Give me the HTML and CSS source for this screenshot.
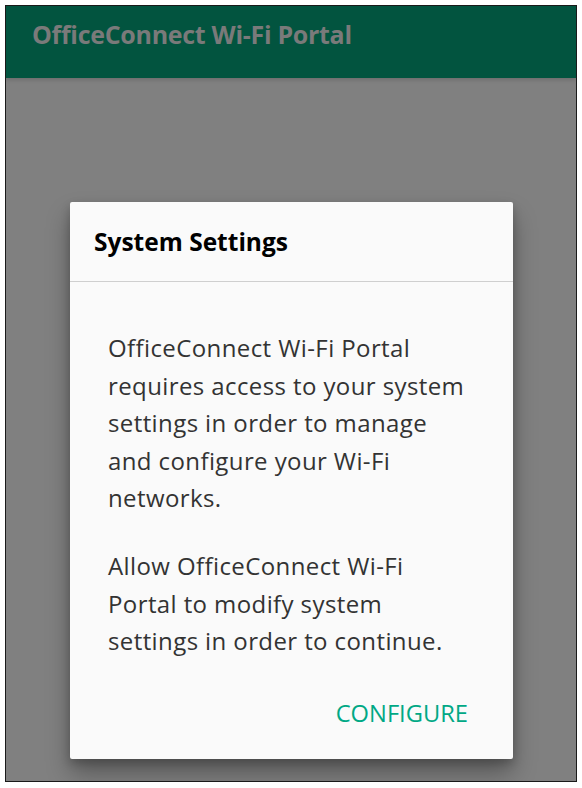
FILE: index.html
```html
<!DOCTYPE html>
<html>
<head>
<meta charset="utf-8">
<link rel="stylesheet" href="styles.css">
</head>
<body>
<div class="frame">
  <header class="appbar">
    <h1 class="app-title">OfficeConnect Wi-Fi Portal</h1>
  </header>
  <main class="scrim">
    <section class="dialog">
      <h2 class="dialog-title">System Settings</h2>
      <div class="dialog-body">
        <p>OfficeConnect Wi-Fi Portal requires access to your system settings in order to manage and configure your Wi-Fi networks.</p>
        <p>Allow OfficeConnect Wi-Fi Portal to modify system settings in order to continue.</p>
      </div>
      <div class="dialog-actions">
        <button class="action">CONFIGURE</button>
      </div>
    </section>
  </main>
</div>
</body>
</html>
```
FILE: styles.css
```css
html, body {
  margin: 0;
  padding: 0;
  background: #ffffff;
}
body {
  font-family: "Open Sans", "Noto Sans", sans-serif;
}
.frame {
  margin: 5px;
  width: 570px;
  height: 775px;
  border: 1px solid #1a1a1a;
  display: flex;
  flex-direction: column;
  overflow: hidden;
}
.appbar {
  height: 72px;
  flex: none;
  background: #02543f;
  display: flex;
  align-items: center;
  padding-left: 26px;
  position: relative;
  z-index: 1;
  box-shadow: 0 2px 4px rgba(0,0,0,0.15);
}
.app-title {
  margin: 0 0 16px 0;
  font-size: 25px;
  font-weight: 700;
  color: #7a7a7a;
  letter-spacing: -0.3px;
}
.scrim {
  flex: 1;
  background: #808080;
  padding: 124px 63px 0 64px;
}
.dialog {
  background: #fafafa;
  height: 557px;
  border-radius: 2px;
  box-shadow: 0 14px 24px rgba(0,0,0,0.32), 0 4px 10px rgba(0,0,0,0.2);
  display: flex;
  flex-direction: column;
}
.dialog-title {
  margin: 0;
  height: 80px;
  box-sizing: border-box;
  padding: 23px 24px 0 24px;
  font-size: 24.5px;
  font-weight: 700;
  color: #000;
  border-bottom: 1px solid #cfcfcf;
}
.dialog-body {
  padding: 47px 0 0 38px;
  width: 362px;
  color: #333;
  font-size: 24px;
  line-height: 37.5px;
  letter-spacing: 0.4px;
}
.dialog-body p {
  margin: 0 0 30.5px 0;
}
.dialog-actions {
  margin-top: auto;
  display: flex;
  justify-content: flex-end;
  padding: 0 45px 30px 0;
}
.action {
  border: 0;
  background: none;
  padding: 0;
  font-family: inherit;
  font-size: 23.7px;
  color: #00a885;
}
```
